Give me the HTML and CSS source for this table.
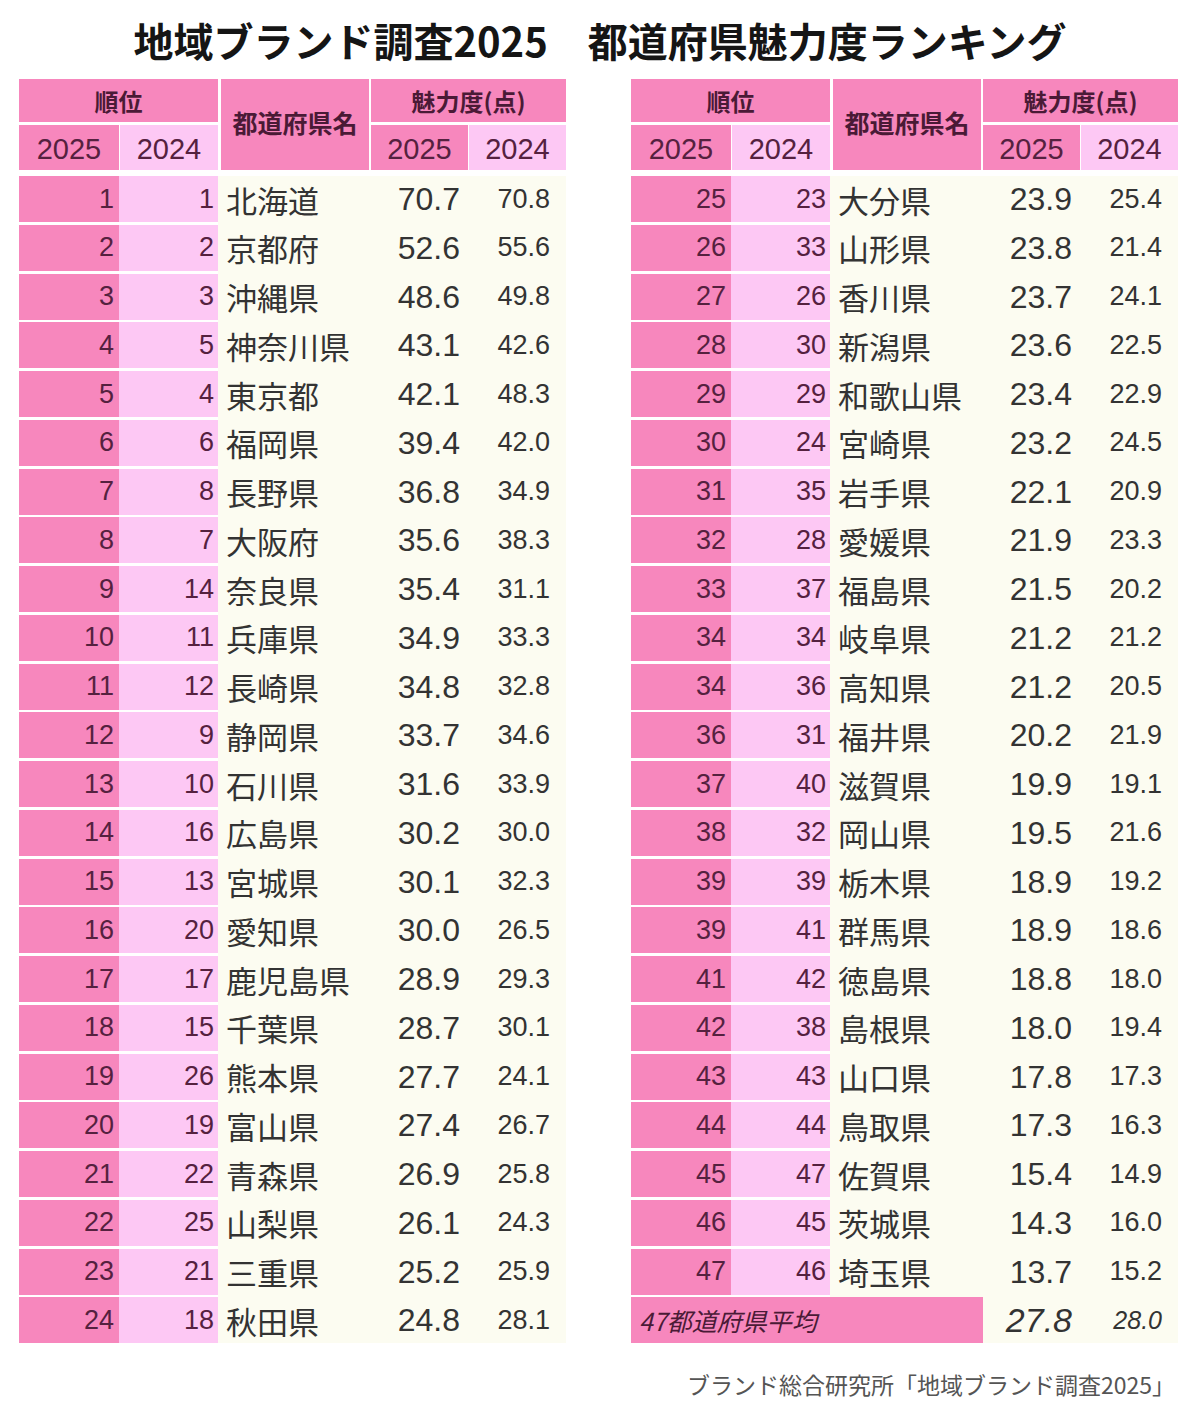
FILE: index.html
```html
<!DOCTYPE html>
<html lang="ja">
<head>
<meta charset="utf-8">
<title>地域ブランド調査2025 都道府県魅力度ランキング</title>
<link rel="stylesheet" href="styles.css">
</head>
<body>
<h1 class="title">地域ブランド調査2025　都道府県魅力度ランキング</h1>
<div class="tables">
  <div class="tbl">
    <div class="head">
      <div class="h h-rank">順位</div>
      <div class="h h-name">都道府県名</div>
      <div class="h h-score">魅力度(点)</div>
      <div class="h y dark">2025</div>
      <div class="h y light">2024</div>
      <div class="h y dark y-s1">2025</div>
      <div class="h y light y-s2">2024</div>
    </div>
    <div class="body">
      <div class="r1">1</div><div class="r2">1</div><div class="nm">北海道</div><div class="s1">70.7</div><div class="s2">70.8</div>
      <div class="r1">2</div><div class="r2">2</div><div class="nm">京都府</div><div class="s1">52.6</div><div class="s2">55.6</div>
      <div class="r1">3</div><div class="r2">3</div><div class="nm">沖縄県</div><div class="s1">48.6</div><div class="s2">49.8</div>
      <div class="r1">4</div><div class="r2">5</div><div class="nm">神奈川県</div><div class="s1">43.1</div><div class="s2">42.6</div>
      <div class="r1">5</div><div class="r2">4</div><div class="nm">東京都</div><div class="s1">42.1</div><div class="s2">48.3</div>
      <div class="r1">6</div><div class="r2">6</div><div class="nm">福岡県</div><div class="s1">39.4</div><div class="s2">42.0</div>
      <div class="r1">7</div><div class="r2">8</div><div class="nm">長野県</div><div class="s1">36.8</div><div class="s2">34.9</div>
      <div class="r1">8</div><div class="r2">7</div><div class="nm">大阪府</div><div class="s1">35.6</div><div class="s2">38.3</div>
      <div class="r1">9</div><div class="r2">14</div><div class="nm">奈良県</div><div class="s1">35.4</div><div class="s2">31.1</div>
      <div class="r1">10</div><div class="r2">11</div><div class="nm">兵庫県</div><div class="s1">34.9</div><div class="s2">33.3</div>
      <div class="r1">11</div><div class="r2">12</div><div class="nm">長崎県</div><div class="s1">34.8</div><div class="s2">32.8</div>
      <div class="r1">12</div><div class="r2">9</div><div class="nm">静岡県</div><div class="s1">33.7</div><div class="s2">34.6</div>
      <div class="r1">13</div><div class="r2">10</div><div class="nm">石川県</div><div class="s1">31.6</div><div class="s2">33.9</div>
      <div class="r1">14</div><div class="r2">16</div><div class="nm">広島県</div><div class="s1">30.2</div><div class="s2">30.0</div>
      <div class="r1">15</div><div class="r2">13</div><div class="nm">宮城県</div><div class="s1">30.1</div><div class="s2">32.3</div>
      <div class="r1">16</div><div class="r2">20</div><div class="nm">愛知県</div><div class="s1">30.0</div><div class="s2">26.5</div>
      <div class="r1">17</div><div class="r2">17</div><div class="nm">鹿児島県</div><div class="s1">28.9</div><div class="s2">29.3</div>
      <div class="r1">18</div><div class="r2">15</div><div class="nm">千葉県</div><div class="s1">28.7</div><div class="s2">30.1</div>
      <div class="r1">19</div><div class="r2">26</div><div class="nm">熊本県</div><div class="s1">27.7</div><div class="s2">24.1</div>
      <div class="r1">20</div><div class="r2">19</div><div class="nm">富山県</div><div class="s1">27.4</div><div class="s2">26.7</div>
      <div class="r1">21</div><div class="r2">22</div><div class="nm">青森県</div><div class="s1">26.9</div><div class="s2">25.8</div>
      <div class="r1">22</div><div class="r2">25</div><div class="nm">山梨県</div><div class="s1">26.1</div><div class="s2">24.3</div>
      <div class="r1">23</div><div class="r2">21</div><div class="nm">三重県</div><div class="s1">25.2</div><div class="s2">25.9</div>
      <div class="r1">24</div><div class="r2">18</div><div class="nm">秋田県</div><div class="s1">24.8</div><div class="s2">28.1</div>
    </div>
  </div>
  <div class="tbl">
    <div class="head">
      <div class="h h-rank">順位</div>
      <div class="h h-name">都道府県名</div>
      <div class="h h-score">魅力度(点)</div>
      <div class="h y dark">2025</div>
      <div class="h y light">2024</div>
      <div class="h y dark y-s1">2025</div>
      <div class="h y light y-s2">2024</div>
    </div>
    <div class="body">
      <div class="r1">25</div><div class="r2">23</div><div class="nm">大分県</div><div class="s1">23.9</div><div class="s2">25.4</div>
      <div class="r1">26</div><div class="r2">33</div><div class="nm">山形県</div><div class="s1">23.8</div><div class="s2">21.4</div>
      <div class="r1">27</div><div class="r2">26</div><div class="nm">香川県</div><div class="s1">23.7</div><div class="s2">24.1</div>
      <div class="r1">28</div><div class="r2">30</div><div class="nm">新潟県</div><div class="s1">23.6</div><div class="s2">22.5</div>
      <div class="r1">29</div><div class="r2">29</div><div class="nm">和歌山県</div><div class="s1">23.4</div><div class="s2">22.9</div>
      <div class="r1">30</div><div class="r2">24</div><div class="nm">宮崎県</div><div class="s1">23.2</div><div class="s2">24.5</div>
      <div class="r1">31</div><div class="r2">35</div><div class="nm">岩手県</div><div class="s1">22.1</div><div class="s2">20.9</div>
      <div class="r1">32</div><div class="r2">28</div><div class="nm">愛媛県</div><div class="s1">21.9</div><div class="s2">23.3</div>
      <div class="r1">33</div><div class="r2">37</div><div class="nm">福島県</div><div class="s1">21.5</div><div class="s2">20.2</div>
      <div class="r1">34</div><div class="r2">34</div><div class="nm">岐阜県</div><div class="s1">21.2</div><div class="s2">21.2</div>
      <div class="r1">34</div><div class="r2">36</div><div class="nm">高知県</div><div class="s1">21.2</div><div class="s2">20.5</div>
      <div class="r1">36</div><div class="r2">31</div><div class="nm">福井県</div><div class="s1">20.2</div><div class="s2">21.9</div>
      <div class="r1">37</div><div class="r2">40</div><div class="nm">滋賀県</div><div class="s1">19.9</div><div class="s2">19.1</div>
      <div class="r1">38</div><div class="r2">32</div><div class="nm">岡山県</div><div class="s1">19.5</div><div class="s2">21.6</div>
      <div class="r1">39</div><div class="r2">39</div><div class="nm">栃木県</div><div class="s1">18.9</div><div class="s2">19.2</div>
      <div class="r1">39</div><div class="r2">41</div><div class="nm">群馬県</div><div class="s1">18.9</div><div class="s2">18.6</div>
      <div class="r1">41</div><div class="r2">42</div><div class="nm">徳島県</div><div class="s1">18.8</div><div class="s2">18.0</div>
      <div class="r1">42</div><div class="r2">38</div><div class="nm">島根県</div><div class="s1">18.0</div><div class="s2">19.4</div>
      <div class="r1">43</div><div class="r2">43</div><div class="nm">山口県</div><div class="s1">17.8</div><div class="s2">17.3</div>
      <div class="r1">44</div><div class="r2">44</div><div class="nm">鳥取県</div><div class="s1">17.3</div><div class="s2">16.3</div>
      <div class="r1">45</div><div class="r2">47</div><div class="nm">佐賀県</div><div class="s1">15.4</div><div class="s2">14.9</div>
      <div class="r1">46</div><div class="r2">45</div><div class="nm">茨城県</div><div class="s1">14.3</div><div class="s2">16.0</div>
      <div class="r1">47</div><div class="r2">46</div><div class="nm">埼玉県</div><div class="s1">13.7</div><div class="s2">15.2</div>
      <div class="avg">47都道府県平均</div><div class="s1 it">27.8</div><div class="s2 it small">28.0</div>
    </div>
  </div>
</div>
<p class="source">ブランド総合研究所「地域ブランド調査2025」</p>
</body>
</html>
```

FILE: styles.css
```css
* { box-sizing: border-box; }

body {
  margin: 0;
  background: #ffffff;
  font-family: "Noto Sans CJK JP", "Noto Sans", sans-serif;
  color: #333;
}

.title {
  margin: 0;
  padding-top: 16px;
  height: 63px;
  line-height: 48px;
  text-align: center;
  font-size: 40px;
  font-weight: 700;
  color: #151515;
}

.tables {
  display: flex;
  gap: 65px;
  padding-left: 19px;
  margin-top: 16px;
}

.tbl {
  width: 547px;
  display: flex;
  flex-direction: column;
  gap: 6px;
}

.head {
  display: grid;
  grid-template-columns: 100px 99px 153px 97px 98px;
  grid-template-rows: 43px 45px;
  row-gap: 3px;
}

.h {
  display: flex;
  align-items: center;
  justify-content: center;
  background: #f787bd;
  color: #4a1a36;
  font-weight: 700;
  font-size: 24px;
  line-height: 1;
}

.h-rank { grid-column: 1 / 3; grid-row: 1; }
.h-name {
  grid-column: 3;
  grid-row: 1 / 3;
  border-left: 3px solid #fff;
  border-right: 2px solid #fff;
  padding-bottom: 4px;
  font-size: 25px;
}
.h-score { grid-column: 4 / 6; grid-row: 1; }

.y {
  font-family: "Liberation Sans", Arial, sans-serif;
  font-weight: 400;
  font-size: 29px;
  color: #55213f;
  padding-top: 4px;
}
.y.dark { background: #f787bd; }
.y.light { background: #fdc8f4; border-left: 1px solid #fff; }
.y-s1 { grid-column: 4; }
.y-s2 { grid-column: 5; border-left: 2px solid #fff; }

.body {
  display: grid;
  grid-template-columns: 100px 99px 153px 97px 98px;
  grid-auto-rows: 46px;
  row-gap: 2.75px;
  background: linear-gradient(to right, #ffffff 199px, #fcfcf1 199px);
}

.r1, .r2, .s1, .s2 {
  display: flex;
  align-items: center;
  justify-content: flex-end;
  font-family: "Liberation Sans", Arial, sans-serif;
  line-height: 1;
}

.r1 {
  background: #f787bd;
  color: #55213f;
  font-size: 27px;
  padding-right: 5px;
}

.r2 {
  background: #fdc8f4;
  color: #55213f;
  font-size: 27px;
  padding-right: 4px;
}

.nm {
  display: flex;
  align-items: center;
  padding-left: 8px;
  font-size: 31px;
  line-height: 1;
  color: #333;
}

.s1 {
  font-size: 32px;
  color: #333;
  padding-right: 8px;
}

.s2 {
  font-size: 27px;
  color: #333;
  padding-right: 16px;
}

.avg {
  grid-column: 1 / 4;
  background: #f787bd;
  display: flex;
  align-items: center;
  padding-left: 8px;
  font-style: italic;
  font-size: 25px;
  color: #4a1a36;
  line-height: 1;
}

.it { font-style: italic; }
.s1.it { font-size: 34px; }
.s2.small { font-size: 25px; }

.source {
  margin: 26px 0 0;
  padding-right: 25px;
  text-align: right;
  font-size: 23px;
  line-height: 30px;
  color: #555;
}
```
